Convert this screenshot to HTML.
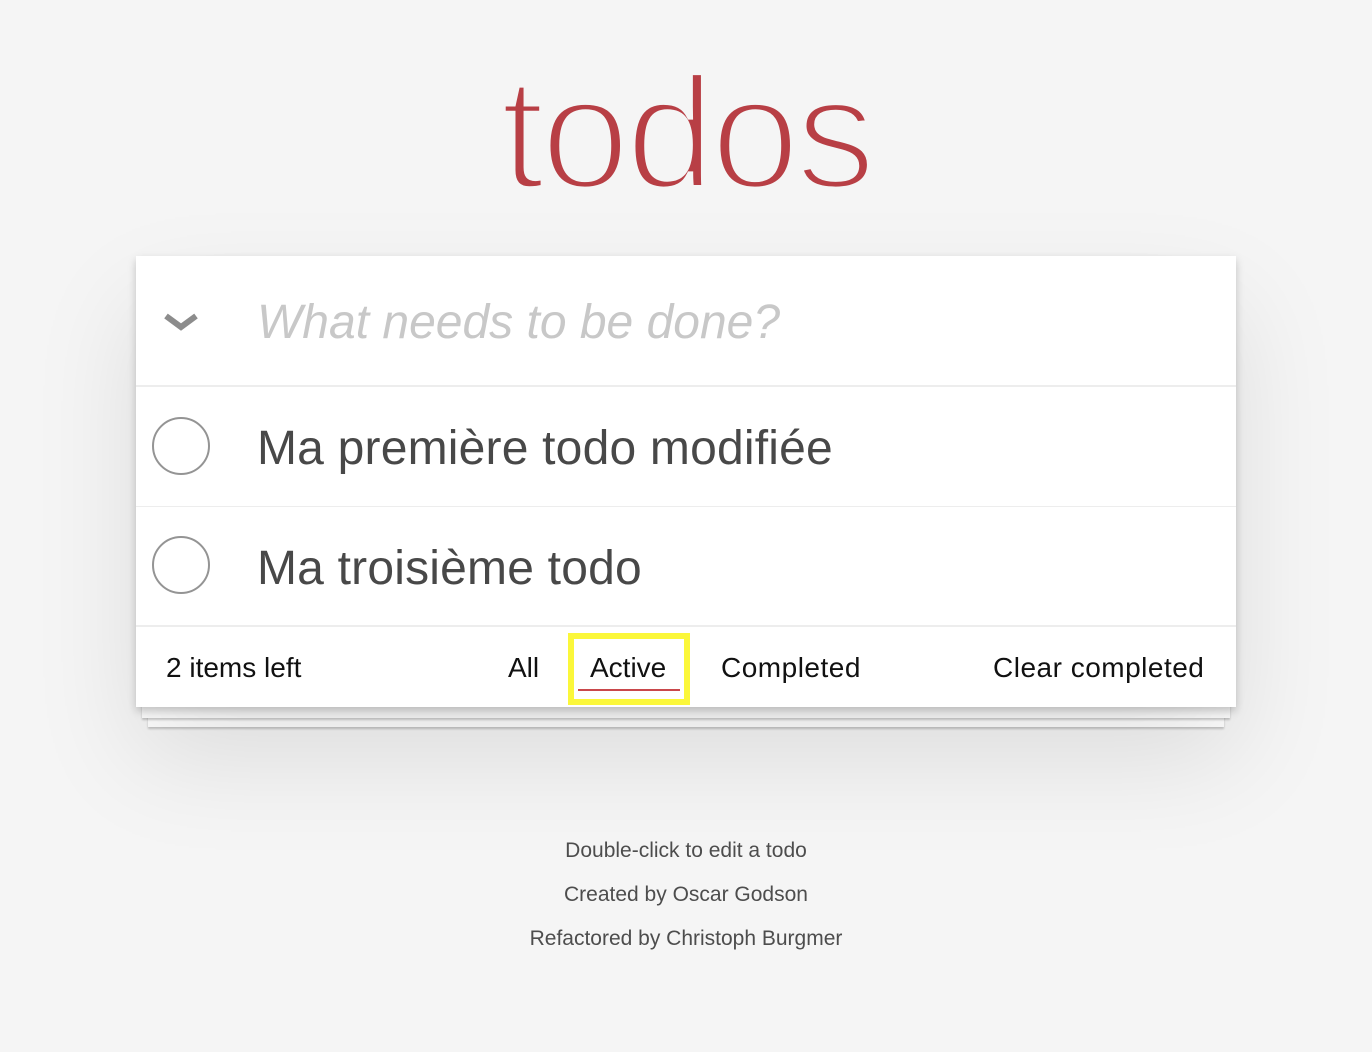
<!DOCTYPE html>
<html><head><meta charset="utf-8"><style>
html,body{margin:0;padding:0;background:#f5f5f5;width:1372px;height:1052px;overflow:hidden;font-family:"Liberation Sans",Arial,sans-serif;}
.abs{position:absolute;}
.title{left:0;width:1372px;text-align:center;top:53px;font-size:160px;line-height:160px;color:#b83f45;letter-spacing:-4px;-webkit-text-stroke:6px #f5f5f5;}
.stack{background:#fff;box-shadow:0 2px 2px rgba(0,0,0,0.2);}
.app{left:136px;top:256px;width:1100px;height:451px;background:#fff;box-shadow:0 4px 8px rgba(0,0,0,0.2),0 50px 100px rgba(0,0,0,0.1);}
.sep{left:0;width:1100px;height:2px;background:#ededed;}
.txt{color:#484848;font-size:48px;white-space:nowrap;}
.circle{width:58px;height:58px;border:2px solid #949494;border-radius:50%;box-sizing:border-box;}
.f{font-size:28px;color:#111;white-space:nowrap;}
.credit{left:0;width:1372px;text-align:center;font-size:21px;color:#4d4d4d;}
</style></head><body>
<div class="abs title">todos</div>
<div class="abs stack" style="left:148px;top:700px;width:1076px;height:27px;"></div>
<div class="abs stack" style="left:142px;top:700px;width:1088px;height:18px;"></div>
<div class="abs app">
  <svg class="abs" style="left:28px;top:57px" width="34" height="20" viewBox="0 0 34 20"><path d="M2 3 L17 14 L32 3" fill="none" stroke="#8c8c8c" stroke-width="6"/></svg>
  <div class="abs" style="left:121px;top:39px;font-size:48px;font-style:italic;color:#c8c8c8;white-space:nowrap;">What needs to be done?</div>
  <div class="abs sep" style="top:129px"></div>
  <div class="abs circle" style="left:16px;top:161px"></div>
  <div class="abs txt" style="left:121px;top:165px;letter-spacing:0.2px">Ma première todo modifiée</div>
  <div class="abs sep" style="top:250px;height:1px"></div>
  <div class="abs circle" style="left:16px;top:280px"></div>
  <div class="abs txt" style="left:121px;top:285px;letter-spacing:0.2px">Ma troisième todo</div>
  <div class="abs sep" style="top:369px"></div>
  <div class="abs f" style="left:30px;top:396px">2 items left</div>
  <div class="abs f" style="left:372px;top:396px">All</div>
  <div class="abs" style="left:432px;top:377px;width:122px;height:72px;border:6px solid #fbf73a;box-sizing:border-box;"></div>
  <div class="abs" style="left:442px;top:433px;width:102px;height:2px;background:#c9484b;"></div>
  <div class="abs f" style="left:454px;top:396px">Active</div>
  <div class="abs f" style="left:585px;top:396px;letter-spacing:0.5px">Completed</div>
  <div class="abs f" style="left:857px;top:396px;letter-spacing:0.5px">Clear completed</div>
</div>
<div class="abs credit" style="top:839px">Double-click to edit a todo</div>
<div class="abs credit" style="top:883px">Created by Oscar Godson</div>
<div class="abs credit" style="top:927px">Refactored by Christoph Burgmer</div>
</body></html>
